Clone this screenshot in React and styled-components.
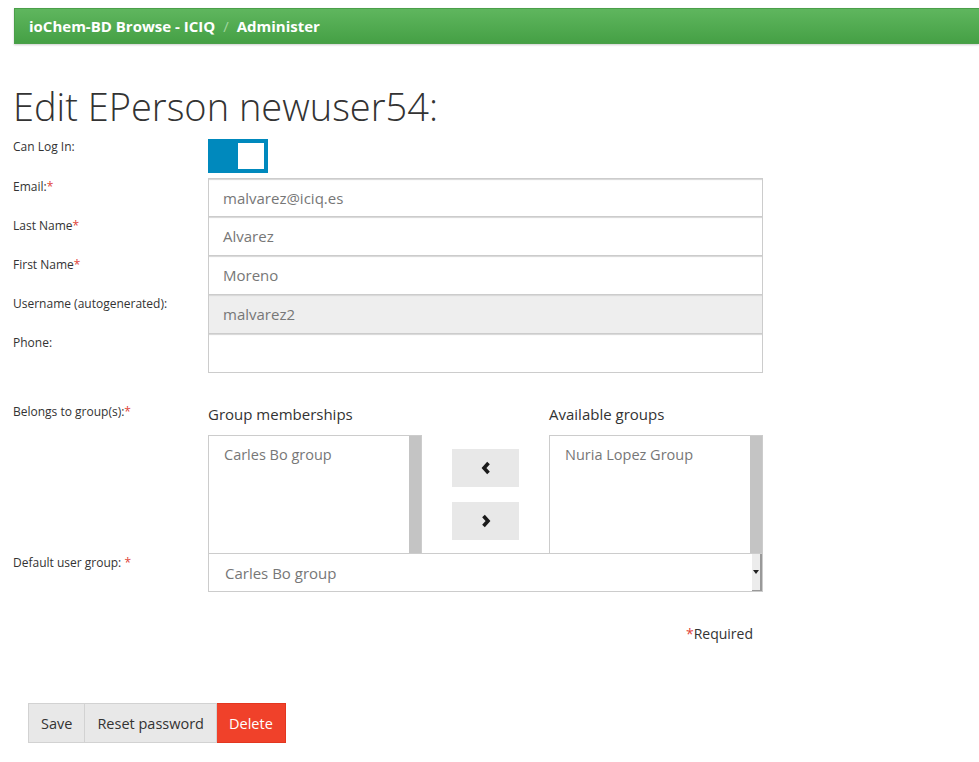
import React from 'react'
import styled, { createGlobalStyle } from 'styled-components'

const GlobalStyle = createGlobalStyle`
  body {
    margin: 0;
    font-family: "Open Sans", "Liberation Sans", sans-serif;
    color: #333;
    background: #fff;
  }
`

const Page = styled.div`
  padding: 8px 0 19px 0;
`

const Breadcrumb = styled.div`
  margin-left: 14px;
  height: 34px;
  display: flex;
  align-items: center;
  padding-left: 14px;
  background: linear-gradient(to bottom, #5fb65e, #45a045);
  border: 1px solid #4a9f49;
  border-right: none;
  box-shadow: 0 1px 2px rgba(0, 0, 0, 0.2);
  color: #fff;
  font-weight: 700;
  font-size: 15px;
`

const Divider = styled.span`
  color: #9fd69e;
  font-weight: 400;
  padding: 0 8px;
`

const Content = styled.div`
  padding-left: 13px;
`

const Title = styled.h1`
  font-weight: 300;
  font-size: 38px;
  margin: 38px 0 6px 0;
  line-height: 48px;
  color: #333;
`

const Form = styled.div`
  display: grid;
  grid-template-columns: 195px 555px;
  row-gap: 0;
`

const Label = styled.div`
  font-size: 12px;
  padding-top: ${p => p.$top || 0}px;
  color: #333;
`

const Star = styled.span`
  color: #e0443a;
`

const ToggleBox = styled.div`
  width: 60px;
  height: 34px;
  background: #0089bd;
  position: relative;
  margin-bottom: 5px;
  margin-top: 3px;
`

const Knob = styled.div`
  position: absolute;
  right: 4px;
  top: 4px;
  width: 26px;
  height: 26px;
  background: #fff;
`

const Input = styled.div`
  height: 39px;
  box-sizing: border-box;
  border: 1px solid #ccc;
  border-top: ${p => (p.$first ? '1px solid #ccc' : 'none')};
  box-shadow: inset 0 2px 1px -1px #d6d6d6;
  background: ${p => (p.$disabled ? '#eee' : '#fff')};
  display: flex;
  align-items: center;
  padding-left: 14px;
  font-size: 15px;
  color: #777;
`

const Spacer = styled.div`
  grid-column: 1 / 3;
  height: ${p => p.$h}px;
`

const Groups = styled.div`
  display: grid;
  grid-template-columns: 214px 127px 214px;
`

const GroupHead = styled.div`
  font-size: 15px;
  color: #333;
  height: 34px;
  padding-top: 3px;
  box-sizing: border-box;
`

const ListBox = styled.div`
  height: 118px;
  box-sizing: border-box;
  border: 1px solid #ccc;
  border-bottom: none;
  display: flex;
  background: #fff;
`

const ListItems = styled.div`
  flex: 1;
  padding: 9px 15px;
  font-size: 14.5px;
  color: #777;
`

const ScrollBar = styled.div`
  width: 12px;
  background: #c4c4c4;
`

const Mover = styled.div`
  display: flex;
  flex-direction: column;
  align-items: center;
  gap: 15px;
  padding-top: 14px;
`

const MoveButton = styled.div`
  width: 67px;
  height: 38px;
  background: #e8e8e8;
  display: flex;
  align-items: center;
  justify-content: center;
`

const Select = styled.div`
  height: 39px;
  box-sizing: border-box;
  border: 1px solid #ccc;
  display: flex;
  align-items: center;
  font-size: 15px;
  color: #777;
  background: #fff;
`

const SelectText = styled.div`
  flex: 1;
  padding-left: 16px;
`

const SelectArrow = styled.div`
  width: 10px;
  height: 37px;
  background: #ececec;
  border-right: 2px solid #999;
  border-bottom: 1px solid #999;
  box-sizing: border-box;
  display: flex;
  align-items: center;
  justify-content: center;
`

const Required = styled.div`
  width: 740px;
  text-align: right;
  font-size: 14px;
  margin-top: 32px;
  color: #333;
`

const Actions = styled.div`
  display: flex;
  margin: 60px 0 0 28px;
`

const Button = styled.div`
  height: 40px;
  box-sizing: border-box;
  display: flex;
  align-items: center;
  padding: 0 ${p => p.$pad || 12}px;
  font-size: 14.5px;
  background: ${p => (p.$danger ? '#f0412a' : '#e8e8e8')};
  color: ${p => (p.$danger ? '#fff' : '#333')};
  border: 1px solid ${p => (p.$danger ? '#e3361f' : '#d2d2d2')};
  border-left: ${p => (p.$first ? undefined : 'none')};
`

const Chevron = ({ left }) => (
  <svg width="12" height="14" viewBox="0 0 12 14">
    <path
      d={left ? 'M8.5 2 L4 7 L8.5 12' : 'M3.5 2 L8 7 L3.5 12'}
      fill="none"
      stroke="#1a1a1a"
      strokeWidth="3.6"
    />
  </svg>
)

export default function App() {
  return (
    <Page>
      <GlobalStyle />
      <Breadcrumb>
        ioChem-BD Browse - ICIQ<Divider>/</Divider>Administer
      </Breadcrumb>
      <Content>
        <Title>Edit EPerson newuser54:</Title>
        <Form>
          <Label $top={2}>Can Log In:</Label>
          <ToggleBox>
            <Knob />
          </ToggleBox>

          <Label>Email:<Star>*</Star></Label>
          <Input $first>malvarez@iciq.es</Input>
          <Label>Last Name<Star>*</Star></Label>
          <Input>Alvarez</Input>
          <Label>First Name<Star>*</Star></Label>
          <Input>Moreno</Input>
          <Label>Username (autogenerated):</Label>
          <Input $disabled>malvarez2</Input>
          <Label>Phone:</Label>
          <Input />

          <Spacer $h={28} />

          <Label $top={2}>Belongs to group(s):<Star>*</Star></Label>
          <Groups>
            <GroupHead>Group memberships</GroupHead>
            <div />
            <GroupHead>Available groups</GroupHead>
            <ListBox>
              <ListItems>Carles Bo group</ListItems>
              <ScrollBar />
            </ListBox>
            <Mover>
              <MoveButton><Chevron left /></MoveButton>
              <MoveButton><Chevron /></MoveButton>
            </Mover>
            <ListBox>
              <ListItems>Nuria Lopez Group</ListItems>
              <ScrollBar />
            </ListBox>
          </Groups>

          <Label $top={1}>Default user group: <Star>*</Star></Label>
          <Select>
            <SelectText>Carles Bo group</SelectText>
            <SelectArrow>
              <svg width="6" height="4" viewBox="0 0 6 4">
                <path d="M0 0 L6 0 L3 4 Z" fill="#222" />
              </svg>
            </SelectArrow>
          </Select>
        </Form>
        <Required><Star>*</Star>Required</Required>
      </Content>
      <Actions>
        <Button $first>Save</Button>
        <Button>Reset password</Button>
        <Button $danger>Delete</Button>
      </Actions>
    </Page>
  )
}
